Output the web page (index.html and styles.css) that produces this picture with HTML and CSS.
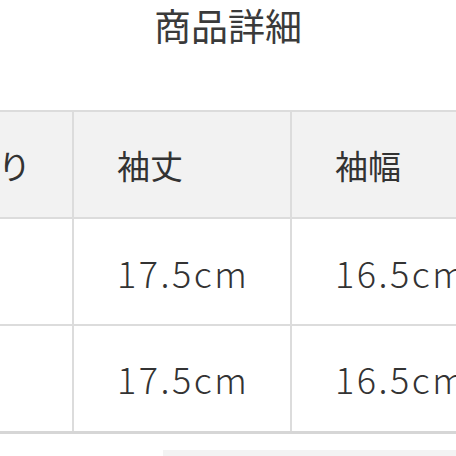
FILE: index.html
```html
<!DOCTYPE html>
<html lang="ja">
<head>
<meta charset="utf-8">
<link rel="stylesheet" href="styles.css">
</head>
<body>
<h2 class="title">商品詳細</h2>
<div class="table-wrap">
  <table class="spec">
    <thead>
      <tr><th>胸まわり</th><th>袖丈</th><th>袖幅</th></tr>
    </thead>
    <tbody>
      <tr><td>45cm</td><td>17.5cm</td><td>16.5cm</td></tr>
      <tr><td>45cm</td><td>17.5cm</td><td>16.5cm</td></tr>
    </tbody>
  </table>
</div>
<div class="next-box"></div>
</body>
</html>
```
FILE: styles.css
```css
html, body {
  margin: 0;
  padding: 0;
  background: #ffffff;
}
body {
  width: 456px;
  height: 456px;
  overflow: hidden;
  font-family: "Noto Sans CJK JP", "Noto Sans", sans-serif;
  color: #333333;
}
.title {
  margin: 0;
  height: 110px;
  font-size: 37px;
  font-weight: 400;
  line-height: 50px;
  text-align: center;
  color: #3a3a3a;
}
.table-wrap {
  width: 456px;
  overflow: hidden;
}
.spec {
  margin-left: -146px;
  width: 654px;
  border-collapse: collapse;
  table-layout: fixed;
  border-top: 2px solid #dcdcdc;
  border-bottom: 3px solid #d6d6d6;
}
.spec th, .spec td {
  box-sizing: border-box;
  width: 218px;
  padding: 0 0 0 43px;
  text-align: left;
  font-weight: 400;
  white-space: nowrap;
  overflow: hidden;
  border-left: 2px solid #dcdcdc;
  border-right: 2px solid #dcdcdc;
  border-bottom: 2px solid #dcdcdc;
}
.spec th {
  height: 107px;
  background: #f2f2f2;
  font-size: 33px;
  color: #333333;
}
.spec td {
  height: 107px;
  font-size: 36px;
  font-weight: 300;
  letter-spacing: 2.5px;
  color: #333333;
}
.spec tbody tr:last-child td {
  border-bottom: none;
}
.next-box {
  margin: 16px 0 0 163px;
  height: 6px;
  background: #f3f3f3;
}
```
